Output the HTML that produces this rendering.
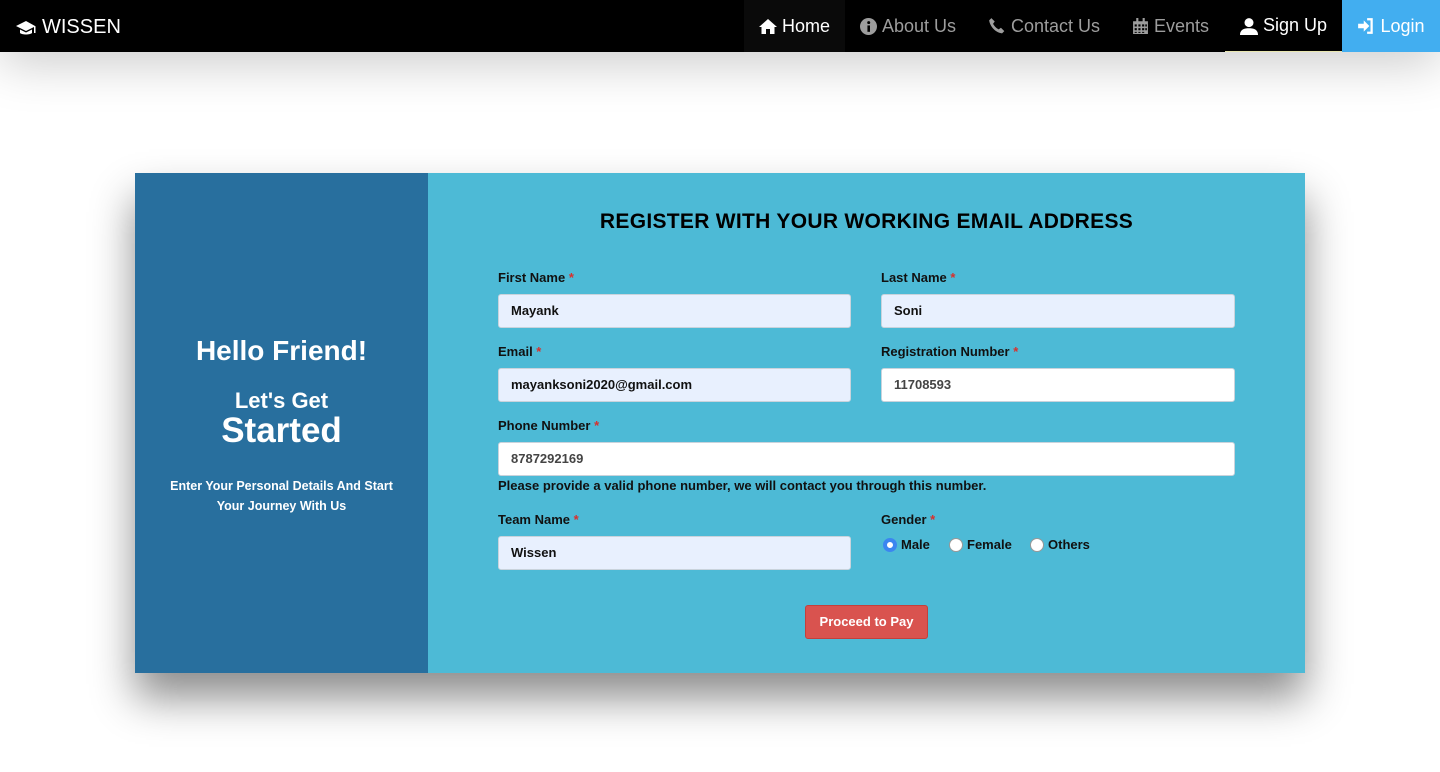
<!DOCTYPE html>
<html><head><meta charset="utf-8"><style>
*{box-sizing:border-box;margin:0;padding:0}
body{width:1440px;height:772px;background:#fff;font-family:"Liberation Sans",sans-serif;position:relative;overflow:hidden}
.nav{position:absolute;left:0;top:0;width:1440px;height:52px;background:#000;box-shadow:0 10px 50px rgba(0,0,0,.22)}
.brand{position:absolute;left:15px;top:16px;color:#fff;font-size:20px;display:flex;align-items:center;gap:5px}
.item{position:absolute;top:0;height:52px;display:flex;align-items:center;font-size:18px;color:#9d9d9d;gap:5px}
.item svg{fill:currentColor}
.card{position:absolute;left:135px;top:173px;width:1170px;height:500px;background:#4dbad6;box-shadow:0 25px 40px rgba(0,0,0,.45)}
.left{position:absolute;left:0;top:0;width:293px;height:500px;background:#286f9e;color:#fff;text-align:center;font-weight:bold}
.abs{position:absolute}
h2{position:absolute;left:293px;width:877px;top:37px;text-align:center;font-size:21px;color:#000;letter-spacing:.3px}
.lbl{position:absolute;font-size:13px;font-weight:bold;color:#111}
.lbl b{color:#d9302c}
.inp{position:absolute;height:34px;border:1px solid #c9d3dc;border-radius:3px;background:#e8f0fe;font-size:13px;font-weight:bold;padding:8px 12px;color:#111}
.w{background:#fff;color:#444}
.radio{display:inline-block;width:14px;height:14px;border-radius:50%;background:#fff;border:1px solid #999;vertical-align:-3px;margin-right:4px}
</style></head><body>
<div class="nav">
<div class="brand"><svg width="22" height="18" viewBox="0 0 22 18"><path fill="#fff" d="M11 2 1 7l10 5 8-4v6h1.5V7.2zM5 10.5v3.5c2 2 10 2 12 0v-3.5l-6 3z"/></svg>WISSEN</div>
<div class="item" style="left:744px;width:101px;background:#0a0a0a;color:#fff;justify-content:center"><svg width="18" height="17" viewBox="0 0 18 17"><path d="M9 1 0 9h2.5v7h4.5v-5h4v5h4.5V9H18z"/></svg>Home</div>
<div class="item" style="left:860px"><svg width="17" height="17" viewBox="0 0 16 16"><circle cx="8" cy="8" r="8"/><rect x="7" y="7" width="2.4" height="6" fill="#000"/><circle cx="8.2" cy="4.3" r="1.4" fill="#000"/></svg>About Us</div>
<div class="item" style="left:988px"><svg width="18" height="18" viewBox="0 0 16 16"><path d="M3 1l3 3-1.5 2c1 2 3 4 5 5l2-1.5 3 3-2 2C7 14 2 9 1 3z"/></svg>Contact Us</div>
<div class="item" style="left:1132px"><svg width="17" height="17" viewBox="0 0 16 16"><path d="M1 3h14v12H1zM4 0h2v3H4zM10 0h2v3h-2z"/><path fill="#000" d="M2.5 6h2v2h-2zm3.5 0h2v2H6zm3.5 0h2v2h-2zm3 0h1.5v2h-1.5zM2.5 9.5h2v2h-2zm3.5 0h2v2H6zm3.5 0h2v2h-2zm3 0h1.5v2h-1.5zM2.5 13h2v1H2.5zm3.5 0h2v1H6zm3.5 0h2v1h-2z"/></svg>Events</div>
<div class="item" style="left:1225px;width:117px;color:#fff;justify-content:center;border-bottom:1px solid #e8e6b0"><svg width="18" height="18" viewBox="0 0 16 16"><circle cx="8" cy="5" r="4"/><path d="M0 16c0-5 4-6 8-6s8 1 8 6z"/></svg>Sign Up</div>
<div class="item" style="left:1342px;width:98px;background:#42aef0;color:#fff;justify-content:center"><svg width="18" height="18" viewBox="0 0 16 16"><path d="M1 6h5V3l5 5-5 5v-3H1z"/><path d="M9 1h5v14H9v-2h3V3H9z"/></svg>Login</div>
</div>
<div class="card">
<div class="left">
<div class="abs" style="left:0;width:293px;top:162px;font-size:28px">Hello Friend!</div>
<div class="abs" style="left:0;width:293px;top:215px;font-size:22px">Let's Get</div>
<div class="abs" style="left:0;width:293px;top:238px;font-size:35px">Started</div>
<div class="abs" style="left:20px;width:253px;top:303px;font-size:12.5px;line-height:20px">Enter Your Personal Details And Start Your Journey With Us</div>
</div>
<h2>REGISTER WITH YOUR WORKING EMAIL ADDRESS</h2>
<div class="lbl" style="left:363px;top:97px">First Name <b>*</b></div>
<div class="lbl" style="left:746px;top:97px">Last Name <b>*</b></div>
<div class="inp" style="left:363px;top:121px;width:353px">Mayank</div>
<div class="inp" style="left:746px;top:121px;width:354px">Soni</div>
<div class="lbl" style="left:363px;top:171px">Email <b>*</b></div>
<div class="lbl" style="left:746px;top:171px">Registration Number <b>*</b></div>
<div class="inp" style="left:363px;top:195px;width:353px">mayanksoni2020@gmail.com</div>
<div class="inp w" style="left:746px;top:195px;width:354px">11708593</div>
<div class="lbl" style="left:363px;top:245px">Phone Number <b>*</b></div>
<div class="inp w" style="left:363px;top:269px;width:737px">8787292169</div>
<div class="lbl" style="left:363px;top:305px">Please provide a valid phone number, we will contact you through this number.</div>
<div class="lbl" style="left:363px;top:339px">Team Name <b>*</b></div>
<div class="lbl" style="left:746px;top:339px">Gender <b>*</b></div>
<div class="inp" style="left:363px;top:363px;width:353px">Wissen</div>
<div class="lbl" style="left:748px;top:364px"><span class="radio" style="border:4px solid #3b86f0"></span>Male</div>
<div class="lbl" style="left:814px;top:364px"><span class="radio"></span>Female</div>
<div class="lbl" style="left:895px;top:364px"><span class="radio"></span>Others</div>
<div class="abs" style="left:670px;top:432px;width:123px;height:34px;background:#d9534f;border:1px solid #c4403c;border-radius:3px;color:#fff;font-size:13px;font-weight:bold;text-align:center;line-height:32px">Proceed to Pay</div>
</div>
</body></html>
